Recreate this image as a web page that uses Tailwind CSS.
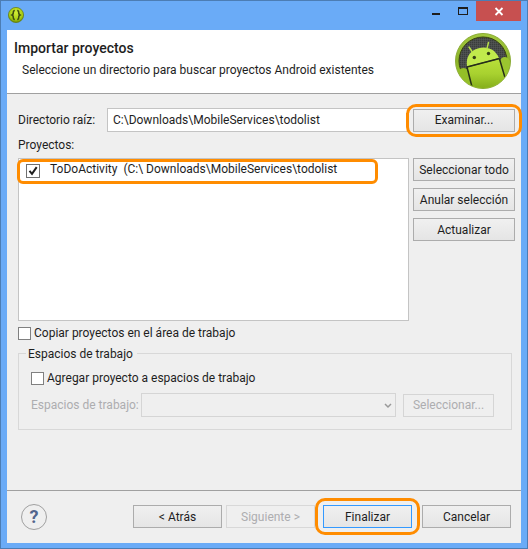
<!DOCTYPE html>
<html lang="es">
<head>
<meta charset="utf-8">
<meta name="viewport" content="width=device-width, initial-scale=1">
<title>Importar proyectos</title>
<script src="https://cdn.jsdelivr.net/npm/@tailwindcss/browser@4"></script>
</head>
<body class="flex min-h-screen flex-col border border-[#4c7db4] bg-[#6aabf7] px-1.5 pb-[5px] font-['Roboto','Open_Sans',sans-serif] text-xs leading-4 text-[#1e1e1e]">
  <div class="flex h-[29px] items-start">
    <svg class="mt-1.5 ml-px size-4" viewBox="0 0 16 16" aria-hidden="true">
      <defs><radialGradient id="app" cx=".5" cy=".35" r=".65"><stop offset="0" stop-color="#d2ec35"/><stop offset=".7" stop-color="#a6cb14"/><stop offset="1" stop-color="#668700"/></radialGradient></defs>
      <circle cx="8" cy="8" r="7.6" fill="url(#app)" stroke="#61770e" stroke-width=".7"/>
      <path d="M6.800 3.500C5 3.500 5.400 5 5.200 6.500 5 7.500 4 8 4 8s1 .5 1.200 1.500c.2 1.500-.2 3 1.600 3M9.200 3.500c1.800 0 1.400 1.500 1.600 3C11 7.500 12 8 12 8s-1 .5-1.200 1.500c-.2 1.500.2 3-1.600 3" fill="none" stroke="#3d4a12" stroke-width="1.500"/>
    </svg>
    <div class="ml-auto flex h-5">
      <button aria-label="Minimizar" class="flex w-[27px] items-center justify-center"><svg class="h-5 w-[27px]" viewBox="0 0 27 20"><path d="M10 12h8v2h-8z" fill="#1e1e1e"/></svg></button>
      <button aria-label="Maximizar" class="flex w-[27px] items-center justify-center"><svg class="h-5 w-[27px]" viewBox="0 0 27 20"><path d="M9 6h10v8H9zM10 8v5h8V8z" fill="#1e1e1e" fill-rule="evenodd"/></svg></button>
      <button aria-label="Cerrar" class="flex w-[45px] items-center justify-center bg-[#c75050]"><svg class="h-5 w-[45px]" viewBox="0 0 45 20"><path d="m19.500 7 7 7m0-7-7 7" stroke="#fff" stroke-width="1.800"/></svg></button>
    </div>
  </div>
  <main class="flex grow flex-col bg-[#efefef]">
    <header class="flex h-16 items-start justify-between border-b border-[#a0a0a0] bg-white pr-2.5 pl-[7px]">
      <div class="pt-2">
        <h1 class="text-sm leading-5 font-medium">Importar proyectos</h1>
        <p class="mt-1 pl-2 leading-4">Seleccione un directorio para buscar proyectos Android existentes</p>
      </div>
      <svg class="mt-[3px] size-14 shrink-0" viewBox="0 0 56 56" role="img" aria-label="Android">
        <defs>
          <linearGradient id="rim" x1="0" y1="0" x2="0" y2="1"><stop offset="0" stop-color="#a2c83e"/><stop offset=".5" stop-color="#8db52b"/><stop offset="1" stop-color="#a6d22c"/></linearGradient>
          <linearGradient id="robot" x1="0" y1="0" x2="0" y2="1"><stop offset="0" stop-color="#b9e03a"/><stop offset=".5" stop-color="#a8d12f"/><stop offset="1" stop-color="#83ac1a"/></linearGradient>
          <pattern id="grid" width="2" height="2" patternUnits="userSpaceOnUse"><path d="M0 0h2v2H0z" fill="#3a3d3c"/><path d="M0 0h2M0 0v2" stroke="#585b5a"/></pattern>
          <clipPath id="disc"><circle cx="28" cy="28" r="27"/></clipPath>
        </defs>
        <circle cx="28" cy="28" r="27.500" fill="url(#rim)" stroke="#8bab35"/>
        <circle cx="28" cy="28" r="24" fill="url(#grid)" stroke="#38410f"/>
        <g clip-path="url(#disc)">
          <path d="M4 38c1-4 8-4 9 0l5 18H0V38z" fill="#94bf28"/>
          <path d="M45 28c1-5 8-5 9-1l3 2v20l-7 2z" fill="#9bc62f"/>
          <path d="m12 34.500 32.500-8.500L53 56H18z" fill="url(#robot)"/>
          <path d="M12 33.500C10.500 24 15 17.500 23.500 15.200S40 16 44 25z" fill="#c1ea4c"/>
          <path d="m17 18.500-3-4.500m18 1.500 1.500-6" stroke="#b7df48" stroke-width="1.500" stroke-linecap="round"/>
          <path d="m12 34 32.500-8.500M12 34l5.500 22M44.500 26l6.500 22" fill="none" stroke="#262f18" stroke-width="1.500"/>
          <circle cx="19.300" cy="24.500" r="1.700" fill="#354015"/><circle cx="33.500" cy="20.500" r="1.700" fill="#354015"/>
        </g>
      </svg>
    </header>

    <form id="import" class="grow pt-3.5 pr-1.5 pl-[11px]">
      <div class="flex items-center">
        <label for="root" class="w-[89px] shrink-0">Directorio raíz:</label>
        <input id="root" value="C:\Downloads\MobileServices\todolist" class="h-6 min-w-0 grow border border-[#c4c4c4] bg-white px-[5px] outline-none">
        <div class="relative ml-1 w-[102px] shrink-0">
          <button type="button" class="block h-[23px] w-full border border-[#acacac] bg-linear-to-b from-[#f0f0f0] to-[#e5e5e5]">Examinar...</button>
          <span class="pointer-events-none absolute -inset-x-[7px] -inset-y-[5px] rounded-[10px] border-3 border-[#ff8c00]"></span>
        </div>
      </div>
      <h2 class="mt-[5px] leading-4">Proyectos:</h2>
      <div class="mt-[5px] flex items-start gap-1">
        <div class="relative h-[163px] min-w-0 grow border border-[#c4c4c4] bg-white">
          <label class="flex h-[23px] items-center gap-2.5 pl-[7px] whitespace-pre">
            <span class="relative flex size-3.5 shrink-0"><input type="checkbox" checked class="peer size-3.5 appearance-none border border-[#707070] bg-white"><svg class="absolute inset-0 hidden peer-checked:block" viewBox="0 0 14 14"><path d="m3.500 6.800 2.500 3 4.700-6.600" fill="none" stroke="#1e1e1e" stroke-width="2"/></svg></span><span class="pb-1">ToDoActivity  (C:\ Downloads\MobileServices\todolist</span></label>
          <span class="pointer-events-none absolute top-0 right-[30px] -left-0.5 h-[25px] rounded-md border-3 border-[#ff8c00]"></span>
        </div>
        <div class="flex w-[102px] shrink-0 flex-col gap-[7px]">
          <button type="button" class="h-[23px] border border-[#acacac] bg-linear-to-b from-[#f0f0f0] to-[#e5e5e5] whitespace-nowrap">Seleccionar todo</button>
          <button type="button" class="h-[23px] border border-[#acacac] bg-linear-to-b from-[#f0f0f0] to-[#e5e5e5] whitespace-nowrap">Anular selección</button>
          <button type="button" class="h-[23px] border border-[#acacac] bg-linear-to-b from-[#f0f0f0] to-[#e5e5e5] whitespace-nowrap">Actualizar</button>
        </div>
      </div>
      <label class="mt-1 flex items-center gap-[3px]"><input type="checkbox" class="size-[13px] shrink-0 appearance-none border border-[#808080] bg-white checked:bg-[#444]">Copiar proyectos en el área de trabajo</label>
      <fieldset class="relative mt-3 mr-[3px] border border-[#d8d8d8] pt-4 pr-[17px] pb-3 pl-3">
        <legend class="absolute -top-2 left-[7px] bg-[#efefef] pr-1 pl-0.5">Espacios de trabajo</legend>
        <label class="flex items-center gap-[3px]"><input type="checkbox" class="size-[13px] shrink-0 appearance-none border border-[#808080] bg-white checked:bg-[#444]">Agregar proyecto a espacios de trabajo</label>
        <div class="mt-[7px] flex items-center text-[#adadb0]">
          <label for="sets" class="w-[110px] shrink-0 whitespace-nowrap">Espacios de trabajo:</label>
          <div class="relative min-w-0 grow">
            <select id="sets" disabled class="block h-6 w-full appearance-none border border-[#d5d5d5]"></select>
            <svg class="pointer-events-none absolute top-2.5 right-1 h-1.5 w-2" viewBox="0 0 8 6"><path d="m1 1 3 3 3-3" fill="none" stroke="#999" stroke-width="1.500"/></svg>
          </div>
          <button type="button" disabled class="ml-[7px] h-[23px] w-[91px] shrink-0 border border-[#d5d5d5]">Seleccionar...</button>
        </div>
      </fieldset>
    </form>

    <footer class="flex h-[53px] items-start border-t border-[#a0a0a0] pt-3.5 pr-2.5 pl-3.5">
      <button type="button" aria-label="Ayuda" class="-mt-px size-[26px] shrink-0 rounded-full border border-[#a0a0a0] text-lg leading-6 font-bold text-[#52658c]">?</button>
      <div class="ml-auto flex">
        <button type="button" class="h-[23px] w-[89px] border border-[#acacac] bg-linear-to-b from-[#f0f0f0] to-[#e5e5e5]">&lt; Atrás</button>
        <button type="button" disabled class="ml-1 h-[23px] w-[89px] border border-[#d8d8d8] text-[#adadb0]">Siguiente &gt;</button>
        <div class="relative ml-2">
          <button form="import" class="block h-[23px] w-[89px] border border-[#3399ff] bg-linear-to-b from-[#f0f0f0] to-[#e5e5e5]">Finalizar</button>
          <span class="pointer-events-none absolute -inset-x-2 -inset-y-[7px] rounded-[10px] border-3 border-[#ff8c00]"></span>
        </div>
        <button type="button" class="ml-2.5 h-[23px] w-[89px] border border-[#acacac] bg-linear-to-b from-[#f0f0f0] to-[#e5e5e5]">Cancelar</button>
      </div>
    </footer>
  </main>
</body>
</html>
